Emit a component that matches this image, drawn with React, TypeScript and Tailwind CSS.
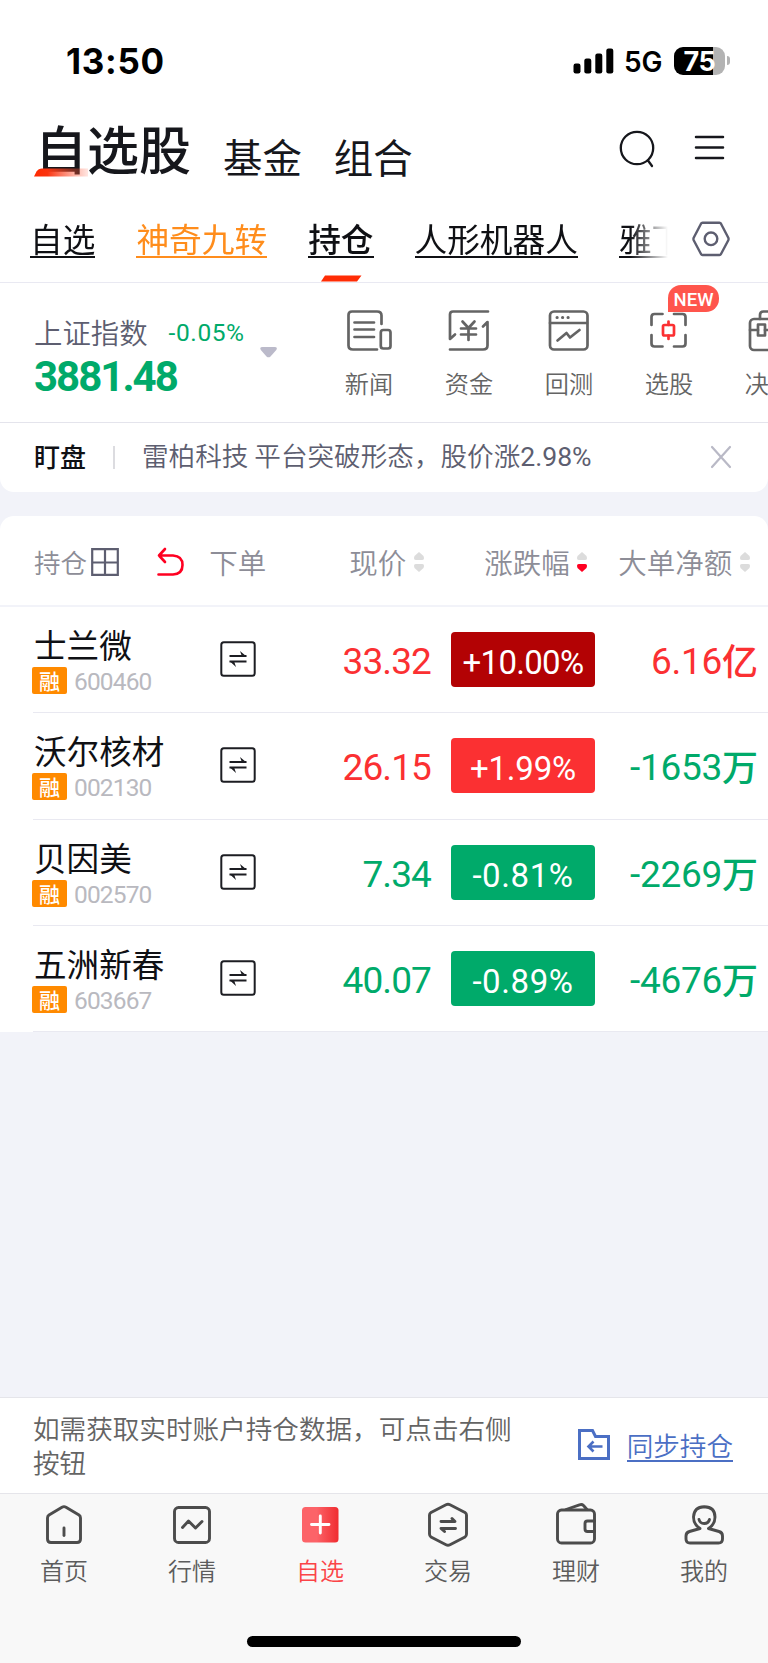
import type { ReactNode } from 'react';
import clsx from 'clsx';

type Stock = {
  name: string;
  code: string;
  price: string;
  change: string;
  amount: string;
  unit: string;
  priceColor: string;
  amountColor: string;
  badge: string;
};

const stocks: Stock[] = [
  { name: '士兰微', code: '600460', price: '33.32', change: '+10.00%', amount: '6.16', unit: '亿', priceColor: 'text-[#fb3032]', amountColor: 'text-[#fb3032]', badge: 'bg-[#b30204] tracking-[-0.7px]' },
  { name: '沃尔核材', code: '002130', price: '26.15', change: '+1.99%', amount: '-1653', unit: '万', priceColor: 'text-[#fb3032]', amountColor: 'text-[#00aa6a]', badge: 'bg-[#fb3032] tracking-[-0.2px]' },
  { name: '贝因美', code: '002570', price: '7.34', change: '-0.81%', amount: '-2269', unit: '万', priceColor: 'text-[#00aa6a]', amountColor: 'text-[#00aa6a]', badge: 'bg-[#00aa6a] tracking-[0.6px]' },
  { name: '五洲新春', code: '603667', price: '40.07', change: '-0.89%', amount: '-4676', unit: '万', priceColor: 'text-[#00aa6a]', amountColor: 'text-[#00aa6a]', badge: 'bg-[#00aa6a] tracking-[0.6px]' },
];

function StatusBar() {
  return (
    <div className="flex h-[121px] items-center justify-between pl-[66px] pr-[38px] font-['Inter'] text-black">
      <span className="pt-[2px] text-[35px] font-bold leading-none tracking-[0.7px]">13:50</span>
      <div className="flex items-center">
        <svg className="h-[26px] w-[42px]" viewBox="0 0 42 26">
          <rect x="0.5" y="15.5" width="7" height="10" rx="2.2" />
          <rect x="11.3" y="10.5" width="7" height="15" rx="2.2" />
          <rect x="22.3" y="5.5" width="7" height="20" rx="2.2" />
          <rect x="33.3" y="0.5" width="7" height="25" rx="2.2" />
        </svg>
        <span className="ml-[9px] w-[50px] pt-[2px] text-[28px] font-semibold leading-none">5G</span>
        <div className="flex h-[28px] w-[51px] items-center justify-center rounded-[9px] bg-[linear-gradient(90deg,#000_76%,#b3b3b3_76%)] pt-px text-[27px] font-bold leading-none tracking-[-0.3px] text-white">
          75
        </div>
        <div className="ml-[2px] h-[9px] w-[3px] rounded-r-full bg-[#b3b3b3]" />
      </div>
    </div>
  );
}

function TitleBar() {
  return (
    <div className="flex h-[79px] text-[#16171c]">
      <div className="relative ml-[35px] text-[52px] font-medium leading-[54px]">
        自选股
        <svg className="absolute left-[-1px] top-[47px] h-[9px] w-[56px]" viewBox="0 0 56 9">
          <defs>
            <linearGradient id="titleMark">
              <stop offset="0" stopColor="#ff2a00" />
              <stop offset="0.25" stopColor="#fa3410" />
              <stop offset="1" stopColor="#ff5a3c" stopOpacity="0.15" />
            </linearGradient>
          </defs>
          <path d="M0 8.500L2.500 3.500Q4.500 0.500 8 0.500H54V8.500Z" fill="url(#titleMark)" />
        </svg>
      </div>
      <span className="ml-[32px] mt-[8px] text-[39.4px] leading-[54px]">基金</span>
      <span className="ml-[32px] mt-[8px] text-[39.4px] leading-[54px]">组合</span>
      <svg className="ml-auto mr-[36px] mt-[7px] h-[44px] w-[40px]" viewBox="0 0 40 44" fill="none" stroke="currentColor" strokeWidth="2.3" strokeLinecap="round">
        <circle cx="20" cy="20" r="16.2" />
        <path d="M31 32.500L35 38" />
      </svg>
      <svg className="mr-[43px] mt-[6px] h-[44px] w-[32px]" viewBox="0 0 32 44" fill="none" stroke="currentColor" strokeWidth="2.5" strokeLinecap="round">
        <path d="M3 10H30M3 20.500H30M3 31H30" />
      </svg>
    </div>
  );
}

// 下划线用边框画，避免与字形相交
const tabClass = 'h-[34px] shrink-0 border-b-2 border-current text-[32.7px] leading-[27px] whitespace-nowrap';

function GroupTabs() {
  return (
    <div className="flex h-[83px] border-b border-[#e9e9f2] text-[#0f1014]">
      <div className="flex w-[668px] gap-[41px] overflow-hidden pl-[30px] pt-[24px] [mask-image:linear-gradient(90deg,#000_630px,transparent_668px)]">
        <span className={tabClass}>自选</span>
        <span className={clsx(tabClass, 'text-[#ff8d1c]')}>神奇九转</span>
        <div className="flex flex-col items-center">
          <span className={clsx(tabClass, 'font-medium')}>持仓</span>
          <svg className="mt-[17px] h-[7px] w-[42px] shrink-0" viewBox="0 0 42 7">
            <path d="M5 0.500H41.500L37 6.500H1Z" fill="#ff2c05" />
          </svg>
        </div>
        <span className={tabClass}>人形机器人</span>
        <span className={tabClass}>雅下</span>
      </div>
      <svg className="ml-[24px] mt-[20px] h-[38px] w-[38px]" viewBox="0 0 38 38" fill="none" stroke="#5d5e70" strokeWidth="2.4" strokeLinejoin="round">
        <path d="M10.500 2.800H27.500Q28.500 2.800 29 3.700L36.300 17.800Q36.800 19 36.300 20.200L29 34Q28.500 35 27.500 35H10.500Q9.500 35 9 34L1.700 20.200Q1.200 19 1.700 17.800L9 3.700Q9.500 2.800 10.500 2.800Z" />
        <circle cx="19" cy="18.800" r="6.300" />
      </svg>
    </div>
  );
}

function QuickItem({ label, children }: { label: string; children: ReactNode }) {
  return (
    <div className="relative flex w-[100px] shrink-0 flex-col items-center pt-[23px] text-[#646464]">
      <svg className="h-[48px] w-[48px]" viewBox="0 0 48 48" fill="none" stroke="currentColor" strokeWidth="2.7" strokeLinecap="round" strokeLinejoin="round">
        {children}
      </svg>
      <span className="mt-[12px] text-[24.2px] font-[350] leading-[34px]">{label}</span>
    </div>
  );
}

function IndexPanel() {
  return (
    <div className="flex h-[140px] overflow-hidden border-b border-[#e4e4ec]">
      <div className="w-[260px] shrink-0 pl-[34px] pt-[29px]">
        <div className="flex items-center">
          <span className="text-[28.4px] font-[350] leading-[32px] text-[#5d5e70]">上证指数</span>
          <span className="ml-[21px] pt-[3px] font-['Roboto'] text-[24.5px] leading-[36px] tracking-[0.6px] text-[#00aa6a]">-0.05%</span>
        </div>
        <div className="mt-[4px] font-['Roboto'] text-[42px] font-bold leading-[44px] tracking-[-2px] text-[#00aa6a]">3881.48</div>
      </div>
      <svg className="mt-[63px] h-[13px] w-[18px] shrink-0" viewBox="0 0 18 13">
        <path d="M2.500 1H14.500Q18 1 16.300 4L10.500 10.400Q8.500 12.300 6.500 10.400L0.800 4Q-0.800 1 2.500 1Z" fill="#bbbaca" />
      </svg>
      <div className="ml-[41px] flex">
        <QuickItem label="新闻">
          <path d="M32 43.500H8Q3.500 43.500 3.500 39.500V9Q3.500 5.500 7 5.500H32Q36.500 5.500 36.500 9.500V18" />
          <path d="M9.500 16.500H29M9.500 23.500H29M9.500 31H29" />
          <rect x="35.800" y="24" width="9.700" height="18.500" rx="2.500" />
        </QuickItem>
        <QuickItem label="资金">
          <path d="M43 5.500H8Q5 5.500 5 8.500V33L10 28.500M5 43.500H38Q42.500 43.500 42.500 39.500V16L38 20.500" />
          <path d="M17.500 15.500L23.500 22L29.500 15.500M16 22.500H31M16 28.500H31M23.500 22V34" />
        </QuickItem>
        <QuickItem label="回测">
          <rect x="5" y="5.500" width="37.500" height="38" rx="4" />
          <path d="M5 17H42" />
          <path d="M12 11.500H12.200M17.500 11.500H17.700M23 11.500H23.200" strokeWidth="3" />
          <path d="M12.500 34.500L21.500 27L25 31.500L34.500 24" />
        </QuickItem>
        <div className="relative">
          <QuickItem label="选股">
            <path d="M6.500 19V11Q6.500 8 9.500 8H17.500M29 8H37.500Q40.500 8 40.500 11V19M6.500 29V37.500Q6.500 40.500 9.500 40.500H17.500M29 40.500H37.500Q40.500 40.500 40.500 37.500V29" />
            <g stroke="#fb3032">
              <rect x="18" y="19" width="11" height="10.500" rx="1.500" />
              <path d="M23.500 15.500V19M23.500 29.500V33" />
            </g>
          </QuickItem>
          <span className="absolute left-[49px] top-[2px] flex h-[27px] w-[51px] items-center justify-center rounded-[13px] rounded-bl-none bg-[#ff554c] pt-[3px] font-['Roboto'] text-[18.5px] font-medium leading-none text-white">
            NEW
          </span>
        </div>
        <QuickItem label="决策">
          <rect x="5" y="13" width="38" height="31" rx="4" />
          <path d="M15 13V9Q15 5.500 18.500 5.500H29Q33 5.500 33 9V13M5 24H13M20 24H28" />
          <rect x="13" y="18.500" width="7" height="11" />
        </QuickItem>
      </div>
    </div>
  );
}

function NoticeBar() {
  return (
    <div className="flex h-[69px] items-center rounded-b-[14px] bg-white pl-[34px] pr-[36px]">
      <span className="mb-[3px] text-[26px] font-medium leading-[36px] text-[#0f1014]">盯盘</span>
      <span className="ml-[27px] h-[23px] w-[2px] bg-[#dcdce0]" />
      <span className="mb-[3px] ml-[27px] text-[26.6px] font-[350] leading-[36px] text-[#5d5e70]">雷柏科技 平台突破形态，股价涨<span className="font-['Roboto'] font-normal">2.98%</span></span>
      <svg className="mb-[2px] ml-auto h-[24px] w-[22px]" viewBox="0 0 22 24" stroke="#b9b9c6" strokeWidth="2.2" strokeLinecap="round">
        <path d="M2 2L20 22M20 2L2 22" />
      </svg>
    </div>
  );
}

function SortIcon({ active = false }: { active?: boolean }) {
  return (
    <svg className="h-[22px] w-[12px]" viewBox="0 0 12 22">
      <path d="M6 1L10.500 5Q12 9 9 9H3Q0 9 1.500 5Z" fill="#dcdcdc" />
      <path d="M6 21L10.500 17Q12 13 9 13H3Q0 13 1.500 17Z" fill={active ? '#ff0021' : '#dcdcdc'} />
    </svg>
  );
}

function TableHead() {
  return (
    <div className="flex h-[91px] items-center border-b-2 border-[#f2f3f9] pl-[34px] pt-[2px] text-[28.5px] font-[350] leading-[36px] text-[#8d8d97]">
      <span className="text-[26.6px]">持仓</span>
      <svg className="ml-[4px] h-[28px] w-[28px]" viewBox="0 0 28 28" fill="none" stroke="#5d5e70" strokeWidth="2.2">
        <path d="M1.200 1.200H26.800V26.800H1.200ZM14 1V27M1 14.500H27" />
      </svg>
      <svg className="ml-[37px] h-[30px] w-[28px]" viewBox="0 0 28 30" fill="none" stroke="#ff0021" strokeWidth="2.600" strokeLinecap="round" strokeLinejoin="round">
        <path d="M9 2L3 8.500L9 15M3 8.500H17Q26.500 9 26.500 18T17 27.500H2.500" />
      </svg>
      <span className="ml-[25px] w-[140px]">下单</span>
      <span className="w-[57px]">现价</span>
      <span className="ml-[7px] w-[71px]"><SortIcon /></span>
      <span className="w-[86px]">涨跌幅</span>
      <span className="ml-[6px] w-[42px]"><SortIcon active /></span>
      <span className="w-[114px]">大单净额</span>
      <span className="ml-[7px]"><SortIcon /></span>
    </div>
  );
}

function OrderIcon() {
  return (
    <svg className="h-[36px] w-[36px]" viewBox="0 0 36 36" fill="none" stroke="#1c1d22" strokeWidth="2">
      <rect x="1.300" y="1.300" width="33.400" height="33.400" rx="2.500" />
      <path d="M9.500 15H26.500M9.500 20.500H26.500" />
      <path d="M20 10L26.500 15.500H22ZM16 26L9.500 20H14Z" fill="#1c1d22" stroke="none" />
    </svg>
  );
}

function StockRow({ stock }: { stock: Stock }) {
  return (
    <div className="flex h-[106.35px] bg-white pl-[33px]">
      <div className="flex flex-1 border-b border-[#e9e9f1]">
        <div className="w-[187px] pt-[20px]">
          <div className="pl-px text-[32.6px] leading-[34px] text-[#0f1014]">{stock.name}</div>
          <div className="ml-[-1px] mt-[5px] flex items-center">
            <span className="flex h-[27px] w-[35px] items-center justify-center rounded-[2px] bg-[#ff8a00] text-[21px] font-medium leading-none text-white">融</span>
            <span className="ml-[7px] pt-[2px] font-['Roboto'] text-[24.5px] leading-[27px] tracking-[-0.85px] text-[#b9b9bf]">{stock.code}</span>
          </div>
        </div>
        <div className="pt-[34px]"><OrderIcon /></div>
        <div className={clsx("w-[175px] pt-[33px] text-right font-['Roboto'] text-[37px] font-[450] leading-[44px] tracking-[-0.9px]", stock.priceColor)}>
          {stock.price}
        </div>
        <div className={clsx("ml-[20px] mt-[25px] flex h-[55px] w-[144px] items-center justify-center rounded-[4px] pt-[6px] font-['Roboto'] text-[33px] leading-none text-white", stock.badge)}>
          {stock.change}
        </div>
        <div className={clsx('flex flex-1 justify-end pr-[10px] text-[36px] leading-[44px]', stock.amountColor)}>
          <span className="pt-[33px] font-['Roboto'] text-[37px] font-[450] tracking-[-0.3px]">{stock.amount}</span>
          <span className="pt-[30px] font-medium">{stock.unit}</span>
        </div>
      </div>
    </div>
  );
}

function SyncBar() {
  return (
    <div className="flex h-[97px] border-y border-[#e5e5ea] bg-white pl-[33px] pr-[35px] text-[26.6px] font-[350]">
      <p className="w-[490px] pt-[13px] leading-[33.5px] text-[#646464]">如需获取实时账户持仓数据，可点击右侧按钮</p>
      <div className="ml-auto flex pt-[30px] text-[#4b6fc4]">
        <svg className="h-[34px] w-[34px]" viewBox="0 0 34 34" fill="none" stroke="currentColor" strokeWidth="3">
          <path d="M2.500 2.500H15.500L18.500 8.500H31.500V30.500H2.500Z" />
          <path d="M25.500 18.500H12M16.500 13.500L11.500 18.500L16.500 23.500" strokeWidth="2.600" />
        </svg>
        <span className="ml-[16px] h-[34px] border-b-2 border-current leading-[34px]">同步持仓</span>
      </div>
    </div>
  );
}

function NavItem({ label, active = false, children }: { label: string; active?: boolean; children: ReactNode }) {
  return (
    <div className="flex w-[128px] flex-col items-center pt-[6px]">
      <svg className="h-[48px] w-[48px]" viewBox="0 0 48 48" fill="none" stroke="#4c4c4c" strokeWidth="2.900" strokeLinecap="round" strokeLinejoin="round">
        {children}
      </svg>
      <span className={clsx('mt-[5px] text-[24px] font-[350] leading-[34px]', active ? 'text-[#fb4447]' : 'text-[#5c5c5c]')}>{label}</span>
    </div>
  );
}

function BottomNav() {
  return (
    <div className="flex h-[169px] flex-col items-center justify-between bg-[#f8f8f8] pb-[16px]">
      <div className="flex">
        <NavItem label="首页">
          <path d="M7.500 18Q7.500 16 9 15L22 7.200Q24 6 26 7.200L39 15Q40.500 16 40.500 18V39Q40.500 42.500 37 42.500H11Q7.500 42.500 7.500 39Z" />
          <path d="M24 28V35.500" />
        </NavItem>
        <NavItem label="行情">
          <rect x="6.500" y="7.500" width="35" height="35" rx="4" />
          <path d="M14.500 27.500L20.500 21L27.500 28L34 21.500" />
        </NavItem>
        <NavItem label="自选" active>
          <defs>
            <linearGradient id="navActive">
              <stop offset="0.4" stopColor="#fc6368" />
              <stop offset="1" stopColor="#f02c30" />
            </linearGradient>
          </defs>
          <rect x="6" y="7" width="36.500" height="35.500" rx="3.500" fill="url(#navActive)" stroke="none" />
          <path d="M15.500 24.500H33M24.300 16V33" stroke="#fff" />
        </NavItem>
        <NavItem label="交易">
          <path d="M22 4.700Q24 3.700 26 4.700L41 12.500Q42.500 13.500 42.500 15V34Q42.500 36 41 37L26 44.800Q24 45.800 22 44.800L7 37Q5.500 36 5.500 34V15Q5.500 13.500 7 12.500Z" />
          <path d="M17 21.500H31L28 18.500M31.500 28.500H17L20.500 31.500" />
        </NavItem>
        <NavItem label="理财">
          <rect x="5.500" y="10" width="37" height="33" rx="4" />
          <path d="M14 9.500L27.500 4.800Q30 4 31.500 5.500L35 9.500M42.500 21H35.500Q33 21 33 23.500V29Q33 31.500 35.500 31.500H42.500" />
        </NavItem>
        <NavItem label="我的">
          <path d="M20 28.500Q13.500 24.500 13.500 17Q14 7 24.200 6.700Q35 7 35 17Q35 24.500 28.500 28.500L39 31.500Q42.500 32.500 42.500 36V39Q42.500 43 38.500 43H10Q6 43 6 39V36Q6 32.500 9.500 31.500Z" />
          <path d="M19 19.500Q20 23.500 24.200 23.500T29.500 19.500" />
        </NavItem>
      </div>
      <div className="h-[11px] w-[274px] rounded-full bg-black" />
    </div>
  );
}

export default function App() {
  return (
    <div className="flex h-[1663px] w-[768px] flex-col overflow-hidden bg-[#f2f3f9] font-['Noto_Sans_CJK_SC',sans-serif]">
      <div className="bg-white">
        <StatusBar />
        <TitleBar />
        <GroupTabs />
        <IndexPanel />
      </div>
      <NoticeBar />
      <div className="mt-[24px] rounded-t-[14px] bg-white">
        <TableHead />
        {stocks.map((stock) => (
          <StockRow key={stock.code} stock={stock} />
        ))}
      </div>
      <div className="mt-auto">
        <SyncBar />
        <BottomNav />
      </div>
    </div>
  );
}
